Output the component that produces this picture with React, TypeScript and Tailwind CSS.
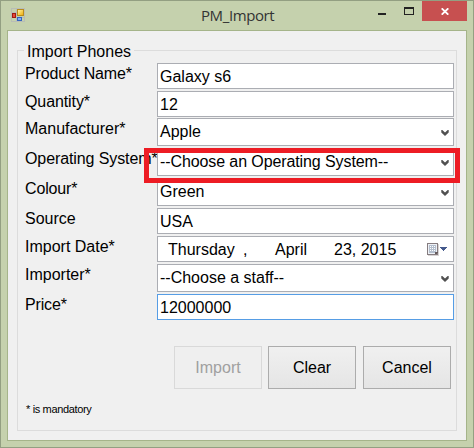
import type { ReactNode } from 'react';

function AppIcon() {
  return (
    <svg width="14" height="14" viewBox="0 0 14 14" shapeRendering="crispEdges">
      <defs>
        <linearGradient id="gold" x1="0" y1="0" x2="1" y2="1">
          <stop offset="0" stopColor="#fff2a0" />
          <stop offset="1" stopColor="#eeb010" />
        </linearGradient>
      </defs>
      <path d="M0.5 0.5h13v13h-13z M5.5 0v14 M0 4.5h6 M0 9.5h14" fill="none" stroke="#b9bdb6" />
      <rect x="6" y="1" width="7" height="7" fill="#b98c1c" />
      <rect x="7" y="2" width="5" height="5" fill="url(#gold)" />
      <rect x="1" y="5" width="4" height="5" fill="#a01c14" />
      <rect x="2" y="6" width="2" height="3" fill="#e8483a" />
      <rect x="6" y="9" width="5" height="4" fill="#3565c0" />
      <rect x="7" y="10" width="3" height="2" fill="#7fb0f5" />
    </svg>
  );
}

function Chevron() {
  return (
    <svg width="8" height="6" viewBox="0 0 8 6" className="absolute top-[11px] right-[4px]">
      <path d="M0.300 0H1.300L4 2.600L6.700 0H7.700V2.600L4 6L0.300 2.600z" fill="#505050" />
    </svg>
  );
}

function CalendarButton() {
  return (
    <svg width="21" height="14" viewBox="0 0 21 14" className="absolute top-[6px] right-[5px]" shapeRendering="crispEdges">
      <rect x="1" y="1" width="11" height="12" fill="#d8d4d4" />
      <rect width="11" height="12" fill="#857c7f" />
      <rect x="1" y="1" width="9" height="10" fill="#eef1f6" />
      <path d="M2 2h7v8h-7z" fill="#b4bfce" />
      <path d="M3 3h1v1h-1zM5 3h1v1h-1zM7 3h1v1h-1zM3 5h1v1h-1zM5 5h1v1h-1zM7 5h1v1h-1zM3 7h1v1h-1zM5 7h1v1h-1zM7 7h1v1h-1z" fill="#fff" />
      <path d="M8 11v-2h3v1h-1v1z" fill="#655a5c" />
      <path d="M13 4h7v1h-1v1h-1v1h-1v1h-1v-1h-1v-1h-1v-1h-1z" fill="#44598c" />
    </svg>
  );
}

type RowProps = {
  label: string;
  tall?: boolean;
  focused?: boolean;
  gap?: string;
  track?: string;
  children: ReactNode;
};

function Row({ label, tall, focused, gap = 'mb-[2px]', track = '', children }: RowProps) {
  return (
    <div className={`flex ${gap} ${tall ? 'h-[28px]' : 'h-[26px]'}`}>
      <label className={`w-[132px] shrink-0 whitespace-pre pt-[2px] leading-[18px] ${track}`}>{label}</label>
      <div
        className={`relative w-[297px] border bg-white pl-[2px] pt-[4px] leading-[18px] whitespace-pre ${
          focused ? 'border-[#569de5]' : 'border-[#abadb3]'
        }`}
      >
        {children}
        {tall && <Chevron />}
      </div>
    </div>
  );
}

export default function App() {
  return (
    <div className="relative h-[448px] w-[474px] overflow-hidden border border-[#939f82] bg-[#c5d1ad] font-['Liberation_Sans',Arial,sans-serif] text-[16px] text-black">
      <header className="flex h-[29px] pl-[10px]">
        <div className="w-[14px] pt-[7px]">
          <AppIcon />
        </div>
        <h1 className="w-[353px] pl-[176px] pt-[4px] font-['Open_Sans',sans-serif] text-[15px] leading-[21px] tracking-[-0.4px] text-[#333]">
          PM_Import
        </h1>
        <div className="mt-[12px] h-[2px] w-[8px] bg-[#222]" />
        <div className="mt-[6px] ml-[18px] h-[8px] w-[10px] border border-t-2 border-[#222]" />
        <button className="ml-[8px] flex h-[20px] w-[45px] justify-center bg-[#c75050] pt-[7px]" aria-label="Close">
          <svg width="8" height="7" viewBox="0 0 8 7">
            <path d="M0.700 0.300L7.300 6.700M7.300 0.300L0.700 6.700" stroke="#fff" strokeWidth="1.800" />
          </svg>
        </button>
      </header>
      <main className="ml-[6px] h-[411px] w-[460px] border border-[#a5b48a] bg-[#f0f0f0] pl-[9px] pt-[11px]">
        <fieldset className="h-[389px] w-[440px] border border-[#dcdcdc] pl-[7px]">
          <legend className="-ml-[1px] h-[17px] w-[110px] pl-[3px] leading-[20px] whitespace-nowrap">Import Phones</legend>
          <div className="mt-[4px]">
            <Row label="Product Name*" track="tracking-[-0.12px]">Galaxy s6</Row>
            <Row label="Quantity*" gap="mb-[1px]" track="tracking-[-0.1px]">12</Row>
            <Row label="Manufacturer*" tall>Apple</Row>
            <Row label="Operating System*" tall track="tracking-[-0.1px]">
              <span className="tracking-[-0.1px]">--Choose an Operating System--</span>
            </Row>
            <Row label="Colour*" tall track="tracking-[-0.15px]">Green</Row>
            <Row label="Source">USA</Row>
            <Row label="Import Date*">
              <div className="flex">
                <span className="ml-[8px] w-[75px]">Thursday</span>
                <span className="w-[32px]">,</span>
                <span className="w-[59px]">April</span>
                <span>23, 2015</span>
              </div>
              <CalendarButton />
            </Row>
            <Row label="Importer*" tall>--Choose a staff--</Row>
            <Row label="Price*" focused track="tracking-[-0.15px]">12000000</Row>
          </div>
          <div className="mt-[26px] ml-[149px] flex h-[43px]">
            <button disabled className="w-[88px] border border-[#d9d9d9] bg-[#efefef] text-[#a0a0a0]">Import</button>
            <button className="ml-[6px] w-[88px] border border-[#acacac] bg-linear-to-b from-[#f0f0f0] to-[#e5e5e5]">Clear</button>
            <button className="ml-[7px] w-[88px] border border-[#acacac] bg-linear-to-b from-[#f0f0f0] to-[#e5e5e5]">Cancel</button>
          </div>
          <p className="mt-[13px] pl-[1px] text-[11px] leading-[14px] tracking-[-0.35px]">* is mandatory</p>
        </fieldset>
      </main>
      <div className="pointer-events-none absolute top-[147px] left-[143px] h-[35px] w-[316px] border-[5px] border-[#ed1c24]" />
    </div>
  );
}
